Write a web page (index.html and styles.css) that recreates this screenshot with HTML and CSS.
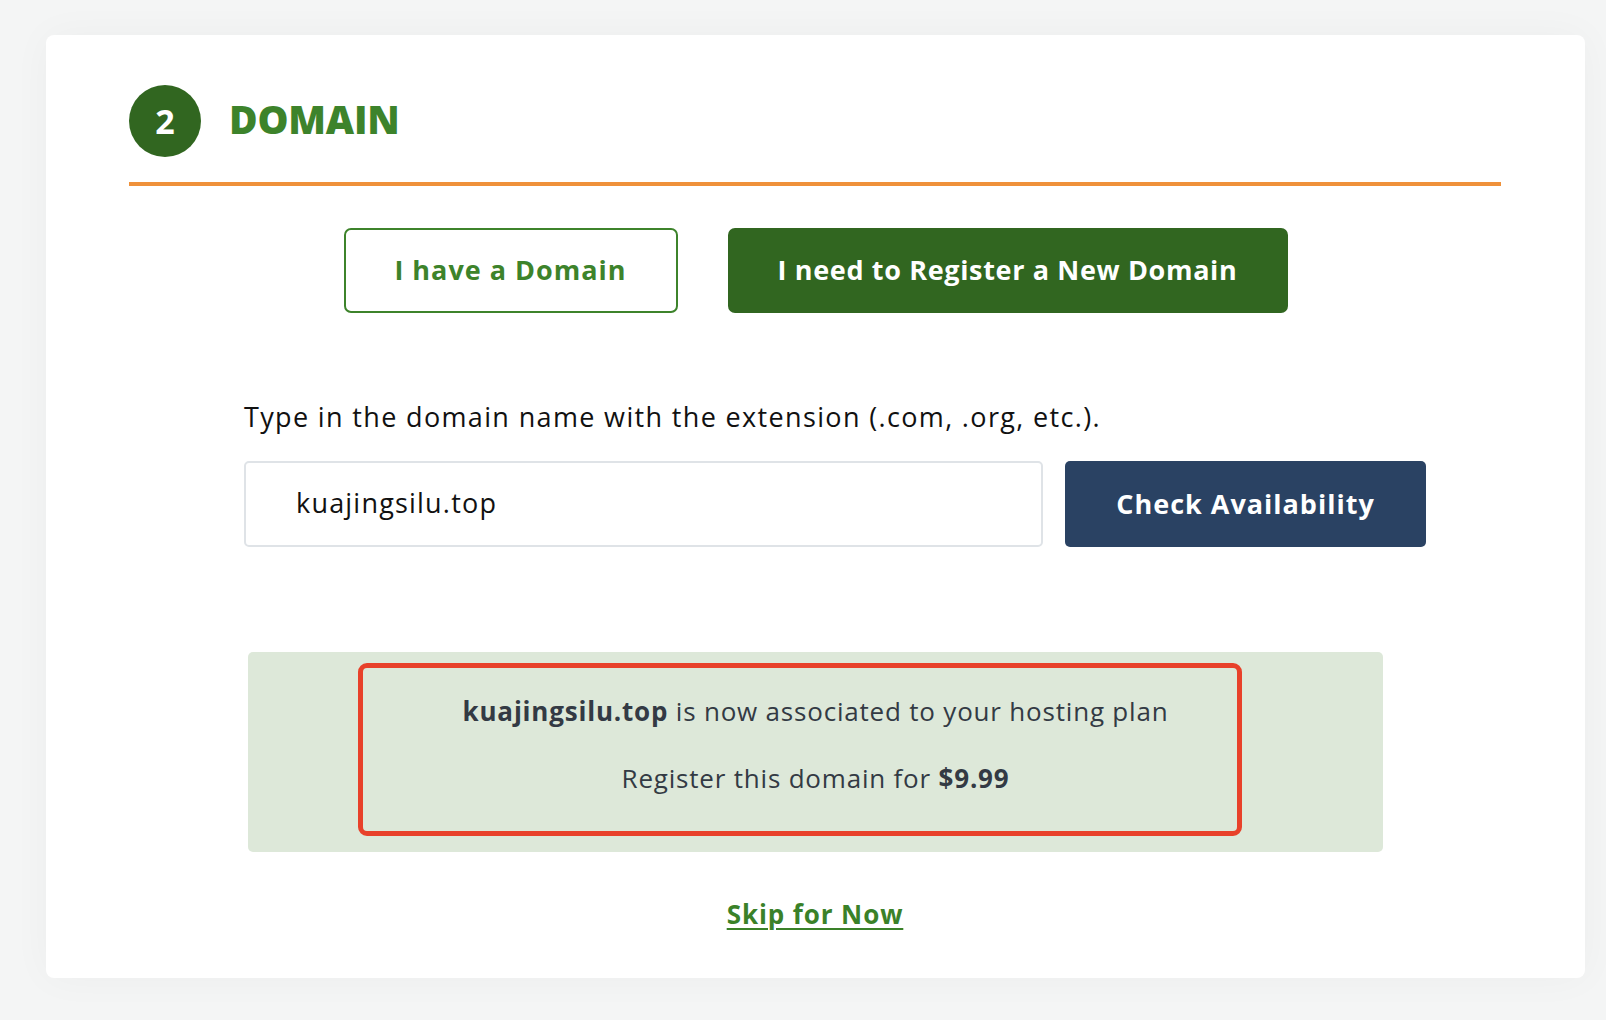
FILE: index.html
```html
<!DOCTYPE html>
<html lang="en">
<head>
<meta charset="utf-8">
<title>Domain</title>
<link rel="stylesheet" href="styles.css">
</head>
<body>
<main class="card">
  <header class="step-head">
    <span class="step-num">2</span>
    <h2 class="step-title">DOMAIN</h2>
  </header>
  <div class="rule"></div>

  <div class="choice-row">
    <button class="btn btn-outline" type="button">I have a Domain</button>
    <button class="btn btn-solid" type="button">I need to Register a New Domain</button>
  </div>

  <section class="form">
    <p class="label">Type in the domain name with the extension (.com, .org, etc.).</p>
    <div class="input-row">
      <div class="input">kuajingsilu.top</div>
      <button class="btn btn-navy" type="button">Check Availability</button>
    </div>
  </section>

  <section class="notice">
    <p class="notice-line"><strong>kuajingsilu.top</strong> is now associated to your hosting plan</p>
    <p class="notice-line second">Register this domain for <strong>$9.99</strong></p>
    <div class="highlight"></div>
  </section>

  <div class="skip-row">
    <a class="skip" href="#">Skip for Now</a>
  </div>
</main>
</body>
</html>
```

FILE: styles.css
```css
* { box-sizing: border-box; }

html, body {
  margin: 0;
  padding: 0;
}

body {
  background: #f4f5f5;
  font-family: "Open Sans", "Liberation Sans", sans-serif;
  color: #111;
  width: 1606px;
  height: 1020px;
  overflow: hidden;
  padding-top: 35px;
  padding-left: 46px;
}

.card {
  width: 1539px;
  height: 943px;
  background: #fff;
  border-radius: 8px;
  box-shadow: 0 0 40px rgba(0, 0, 0, 0.035);
  padding: 50px 84px 0 83px;
}

.step-head {
  display: flex;
  align-items: center;
  gap: 28px;
  height: 72px;
}

.step-num {
  width: 72px;
  height: 72px;
  border-radius: 50%;
  background: #316620;
  color: #fff;
  font-weight: 700;
  font-size: 34px;
  display: flex;
  align-items: center;
  justify-content: center;
  line-height: 1;
}

.step-title {
  margin: 0;
  font-size: 39px;
  font-weight: 800;
  color: #3d832b;
  letter-spacing: -0.2px;
  line-height: 1;
  padding-bottom: 6px;
}

.rule {
  margin-top: 25px;
  height: 4px;
  background: #ef913a;
}

.choice-row {
  margin-top: 42px;
  display: flex;
  justify-content: center;
  gap: 50px;
  padding-left: 1px;
}

.btn {
  font-family: inherit;
  font-size: 27px;
  font-weight: 700;
  border-radius: 7px;
  height: 85px;
  cursor: pointer;
  letter-spacing: 1px;
  padding-bottom: 3px;
}

.btn-outline {
  width: 334px;
  background: #fff;
  color: #3d832b;
  border: 2px solid #3d832b;
}

.btn-solid {
  width: 560px;
  background: #316620;
  color: #fff;
  border: none;
  letter-spacing: 0.65px;
}

.form {
  margin-left: 115px;
  width: 1182px;
  padding-top: 87px;
}

.label {
  margin: 0;
  font-size: 27px;
  line-height: 34px;
  letter-spacing: 1.35px;
  color: #111;
}

.input-row {
  margin-top: 27px;
  display: flex;
  gap: 22px;
}

.input {
  flex: 0 0 799px;
  height: 86px;
  border: 2px solid #dfe3e7;
  border-radius: 5px;
  padding-left: 50px;
  padding-bottom: 3px;
  display: flex;
  align-items: center;
  font-size: 27px;
  letter-spacing: 1.2px;
  color: #111;
}

.btn-navy {
  flex: 1;
  background: #2a4263;
  color: #fff;
  border: none;
  height: 86px;
  border-radius: 5px;
}

.notice {
  position: relative;
  margin-top: 105px;
  margin-left: 119px;
  width: 1135px;
  height: 200px;
  background: #dde8d9;
  border-radius: 5px;
  padding-top: 42px;
  text-align: center;
  color: #333a44;
}

.notice-line {
  margin: 0;
  font-size: 26px;
  line-height: 34px;
  letter-spacing: 0.8px;
}

.notice-line strong {
  font-weight: 700;
}

.notice-line.second {
  margin-top: 33px;
}

.highlight {
  position: absolute;
  left: 110px;
  top: 11px;
  width: 884px;
  height: 173px;
  border: 5px solid #e8412a;
  border-radius: 9px;
  pointer-events: none;
}

.skip-row {
  margin-top: 44px;
  text-align: center;
}

.skip {
  font-size: 26px;
  font-weight: 700;
  color: #3a8129;
  text-decoration: underline;
  text-decoration-thickness: 2px;
  text-underline-offset: 4px;
  letter-spacing: 0.9px;
}
```
